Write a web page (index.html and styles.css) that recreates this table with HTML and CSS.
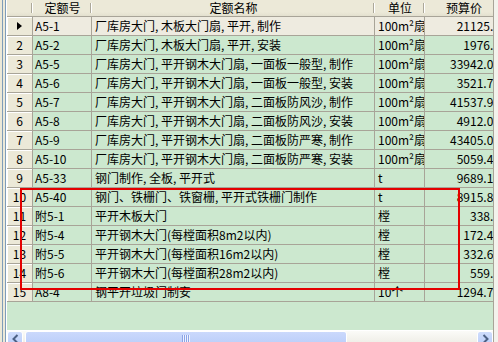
FILE: index.html
```html
<!DOCTYPE html>
<html lang="zh-CN">
<head>
<meta charset="utf-8">
<title>定额列表</title>
<link rel="stylesheet" href="styles.css">
</head>
<body>
<div class="window">
  <div class="leftstrip"></div>
  <div class="main">
    <div class="hdr">
      <div class="hc corner"></div>
      <div class="hc">定额号</div>
      <div class="hc">定额名称</div>
      <div class="hc">单位</div>
      <div class="hc">预算价</div>
    </div>
    <div class="row current"><div class="rh"><span class="tri"></span></div><div class="c code">A5-1</div><div class="c name">厂库房大门, 木板大门扇, 平开, 制作</div><div class="c unit">100m²扇门</div><div class="c price">21125.8</div></div>
    <div class="row"><div class="rh">2</div><div class="c code">A5-2</div><div class="c name">厂库房大门, 木板大门扇, 平开, 安装</div><div class="c unit">100m²扇门</div><div class="c price">1976.4</div></div>
    <div class="row"><div class="rh">3</div><div class="c code">A5-5</div><div class="c name">厂库房大门, 平开钢木大门扇, 一面板一般型, 制作</div><div class="c unit">100m²扇门</div><div class="c price">33942.04</div></div>
    <div class="row"><div class="rh">4</div><div class="c code">A5-6</div><div class="c name">厂库房大门, 平开钢木大门扇, 一面板一般型, 安装</div><div class="c unit">100m²扇门</div><div class="c price">3521.72</div></div>
    <div class="row"><div class="rh">5</div><div class="c code">A5-7</div><div class="c name">厂库房大门, 平开钢木大门扇, 二面板防风沙, 制作</div><div class="c unit">100m²扇门</div><div class="c price">41537.91</div></div>
    <div class="row"><div class="rh">6</div><div class="c code">A5-8</div><div class="c name">厂库房大门, 平开钢木大门扇, 二面板防风沙, 安装</div><div class="c unit">100m²扇门</div><div class="c price">4912.05</div></div>
    <div class="row"><div class="rh">7</div><div class="c code">A5-9</div><div class="c name">厂库房大门, 平开钢木大门扇, 二面板防严寒, 制作</div><div class="c unit">100m²扇门</div><div class="c price">43405.06</div></div>
    <div class="row"><div class="rh">8</div><div class="c code">A5-10</div><div class="c name">厂库房大门, 平开钢木大门扇, 二面板防严寒, 安装</div><div class="c unit">100m²扇门</div><div class="c price">5059.43</div></div>
    <div class="row"><div class="rh">9</div><div class="c code">A5-33</div><div class="c name">钢门制作, 全板, 平开式</div><div class="c unit">t</div><div class="c price">9689.12</div></div>
    <div class="row"><div class="rh">10</div><div class="c code">A5-40</div><div class="c name">钢门、铁栅门、铁窗栅, 平开式铁栅门制作</div><div class="c unit">t</div><div class="c price">8915.84</div></div>
    <div class="row"><div class="rh">11</div><div class="c code">附5-1</div><div class="c name">平开木板大门</div><div class="c unit">樘</div><div class="c price">338.5</div></div>
    <div class="row"><div class="rh">12</div><div class="c code">附5-4</div><div class="c name">平开钢木大门(每樘面积8m2以内)</div><div class="c unit">樘</div><div class="c price">172.45</div></div>
    <div class="row"><div class="rh">13</div><div class="c code">附5-5</div><div class="c name">平开钢木大门(每樘面积16m2以内)</div><div class="c unit">樘</div><div class="c price">332.63</div></div>
    <div class="row"><div class="rh">14</div><div class="c code">附5-6</div><div class="c name">平开钢木大门(每樘面积28m2以内)</div><div class="c unit">樘</div><div class="c price">559.2</div></div>
    <div class="row"><div class="rh">15</div><div class="c code">A8-4</div><div class="c name">钢平开垃圾门制安</div><div class="c unit">10个</div><div class="c price">1294.76</div></div>
    <div class="filler"></div>
    <div class="hscroll">
      <div class="sbtn"><svg width="7" height="10" viewBox="0 0 7 10"><polyline points="5.5,1 1.5,5 5.5,9" fill="none" stroke="#4D6185" stroke-width="2"/></svg></div>
      <div class="thumb"><svg width="9" height="8" viewBox="0 0 9 8"><path d="M0.5 0v8M2.5 0v8M4.5 0v8M6.5 0v8" stroke="#8CA4E6" stroke-width="1"/><path d="M1.5 0v8M3.5 0v8M5.5 0v8M7.5 0v8" stroke="#EEF3FF" stroke-width="1"/></svg></div>
      <div class="track"></div>
      <div class="sbtn"><svg width="7" height="10" viewBox="0 0 7 10"><polyline points="1.5,1 5.5,5 1.5,9" fill="none" stroke="#4D6185" stroke-width="2"/></svg></div>
    </div>
  </div>
  <div class="rightstrip"></div>
  <div class="mark"></div>
</div>
</body>
</html>
```
FILE: styles.css
```css
* { box-sizing: border-box; }
body {
  margin: 0;
  width: 498px;
  height: 342px;
  overflow: hidden;
  background: #ECE9D8;
  font-family: "Noto Sans CJK SC", sans-serif;
  font-size: 12px;
  color: #000;
}
.window {
  position: relative;
  display: flex;
  width: 498px;
  height: 342px;
}
.leftstrip {
  width: 7px;
  flex: none;
  background: linear-gradient(to right, #ECE9D8 0 2px, #7F9DB9 2px 3px, #ECE9D8 3px 5px, #7F9DB9 5px 6px, #ffffff 6px 7px);
}
.main {
  width: 486px;
  flex: none;
  display: flex;
  flex-direction: column;
  overflow: hidden;
  background: #CCE8CF;
}
.rightstrip {
  width: 5px;
  flex: none;
  background: #F3F2EC;
  border-left: 1px solid #A8A498;
}
.hdr, .row {
  display: grid;
  grid-template-columns: 26px 59px 283px 50px 78px;
  flex: none;
}
.hdr { height: 17px; }
.hc {
  height: 17px;
  line-height: 16px;
  font-size: 12px;
  text-align: center;
  white-space: nowrap;
  border-bottom: 1px solid #A8A498;
  background:
    linear-gradient(#ACA899, #ACA899) no-repeat right 1px top 3px / 1px 10px,
    linear-gradient(#ffffff, #ffffff) no-repeat right 0 top 3px / 1px 10px,
    linear-gradient(#ECE9D8 75%, #E3E0CF);
}
.row { height: 19px; }
.rh, .c {
  height: 19px;
  line-height: 18px;
  border-right: 1px solid #A8A498;
  border-bottom: 1px solid #A8A498;
  white-space: nowrap;
  overflow: hidden;
}
.rh {
  background: #ECE9D8;
  box-shadow: inset 1px 1px 0 #ffffff;
  text-align: center;
  display: flex;
  align-items: center;
  justify-content: center;
}
.tri {
  width: 0;
  height: 0;
  border-left: 5px solid #000;
  border-top: 4.5px solid transparent;
  border-bottom: 4.5px solid transparent;
}
.c { background: #CCE8CF; }
.current .c { background: #EEEBE0; }
.code { padding-left: 2px; }
.name { padding-left: 3px; }
.unit { padding-left: 3px; }
.price { text-align: right; padding-right: 2px; }
.filler { flex: 1; background: #CCE8CF; }
.hscroll {
  height: 12px;
  flex: none;
  display: flex;
  align-items: flex-start;
  overflow: hidden;
  background: linear-gradient(#FBFBF8, #F0EFE8);
  border-top: 1px solid #FFFFFF;
}
.sbtn {
  width: 16px;
  height: 17px;
  flex: none;
  border: 1px solid #ffffff;
  border-radius: 3px;
  background: linear-gradient(#CEDCFC, #B9CDF9);
  display: flex;
  justify-content: center;
  padding-top: 2px;
}
.thumb {
  width: 322px;
  height: 17px;
  flex: none;
  margin-left: 2px;
  border: 1px solid #ffffff;
  border-radius: 3px;
  background: linear-gradient(#CBD9FC, #B8CCF9);
  display: flex;
  justify-content: center;
  padding-top: 3px;
}
.track { flex: 1; }
.mark {
  position: absolute;
  left: 20px;
  top: 188px;
  width: 440px;
  height: 102px;
  border: 2px solid #E40000;
}
```
